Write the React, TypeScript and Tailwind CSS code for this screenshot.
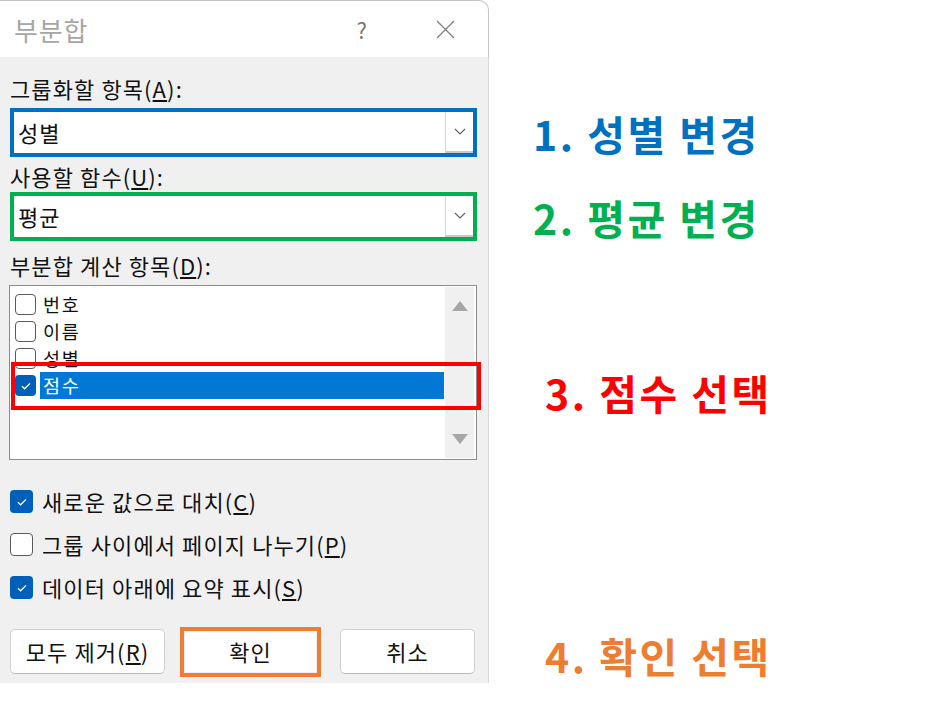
import { ReactNode } from "react"

const font = { fontFamily: '"Noto Sans CJK KR", "Noto Sans", sans-serif' }

function Chevron() {
  return (
    <svg width="12" height="7" viewBox="0 0 12 7" fill="none">
      <path d="M1 1l5 5 5-5" stroke="#606060" strokeWidth="1.2" />
    </svg>
  )
}

function Check({ size = 12 }: { size?: number }) {
  return (
    <svg width={size} height={size} viewBox="0 0 12 12" fill="none">
      <path d="M2 6.2l2.6 2.6L10 3.4" stroke="#ffffff" strokeWidth="1.3" />
    </svg>
  )
}

function Box({ checked, size }: { checked?: boolean; size: string }) {
  return checked ? (
    <span className={`${size} shrink-0 rounded-[4px] bg-[#005fb8] flex items-center justify-center`}>
      <Check />
    </span>
  ) : (
    <span className={`${size} shrink-0 rounded-[4px] border-[1.5px] border-[#5a5a5a] bg-white`} />
  )
}

function Combo({ value, border }: { value: string; border: string }) {
  return (
    <div className={`h-[49px] w-[467px] border-4 ${border} bg-white flex`}>
      <div className="flex-1 flex items-center pl-[4px] text-[22px] tracking-[0.05em] text-[#111]">{value}</div>
      <div className="w-[28px] border-l border-[#d6d6d6] border-b-2 border-b-[#c8c8c8] flex items-center justify-center">
        <Chevron />
      </div>
    </div>
  )
}

function Label({ children, className = "" }: { children: ReactNode; className?: string }) {
  return (
    <div className={`h-[22px] leading-[22px] text-[22px] tracking-[0.05em] text-[#111] ${className}`}>{children}</div>
  )
}

const items = [
  { name: "번호", checked: false },
  { name: "이름", checked: false },
  { name: "성별", checked: false },
  { name: "점수", checked: true },
]

const options = [
  { label: "새로운 값으로 대치", key: "C", checked: true },
  { label: "그룹 사이에서 페이지 나누기", key: "P", checked: false },
  { label: "데이터 아래에 요약 표시", key: "S", checked: true },
]

export default function App() {
  return (
    <div className="w-[940px] h-[701px] bg-white flex overflow-hidden" style={font}>
      {/* dialog */}
      <div className="w-[489px] shrink-0 flex flex-col">
        <div className="h-[57px] bg-white border-t border-r border-[#c4c4c4] rounded-tr-[10px] flex items-center">
          <span className="ml-[14px] text-[26px] tracking-[0.03em] text-[#a6a6a6]">부분합</span>
          <span className="ml-auto mr-[69px] text-[22px] text-[#7a7a7a]">?</span>
          <svg className="mr-[33px]" width="19" height="19" viewBox="0 0 19 19" fill="none">
            <path d="M1 1l17 17M18 1L1 18" stroke="#808080" strokeWidth="1.3" />
          </svg>
        </div>
        <div className="h-[626px] bg-[#f0f0f0] border-r border-[#d8d8d8] pl-[10px] pt-[20px] pb-[9px] flex flex-col">
          <Label>
            그룹화할 항목(<u>A</u>):
          </Label>
          <div className="mt-[9px]">
            <Combo value="성별" border="border-[#0070c0]" />
          </div>
          <Label className="mt-[8px]">
            사용할 함수(<u>U</u>):
          </Label>
          <div className="mt-[5px]">
            <Combo value="평균" border="border-[#00b050]" />
          </div>
          <Label className="mt-[13px]">
            부분합 계산 항목(<u>D</u>):
          </Label>
          <div className="relative mt-[9px] h-[175px] w-[468px] -ml-px border border-[#8c8c8c] bg-white flex">
            <div className="flex-1 pt-[5px] pl-[5px]">
              {items.map((it) => (
                <div key={it.name} className="h-[27px] flex items-center">
                  <Box checked={it.checked} size="w-[21px] h-[21px]" />
                  <span
                    className={`ml-[4px] h-[27px] leading-[27px] text-[18.5px] tracking-[0.1em] pl-[3px] ${
                      it.checked ? "flex-1 bg-[#0078d4] text-white mr-[1px]" : "text-[#111]"
                    }`}
                  >
                    {it.name}
                  </span>
                </div>
              ))}
            </div>
            <div className="w-[29px] mr-[2px] my-[1px] bg-[#f0f0f0] flex flex-col items-center justify-between py-[14px]">
              <svg width="16" height="10" viewBox="0 0 16 10">
                <path d="M8 0L16 10H0z" fill="#a6a6a6" />
              </svg>
              <svg width="16" height="10" viewBox="0 0 16 10">
                <path d="M0 0H16L8 10z" fill="#a6a6a6" />
              </svg>
            </div>
            <div className="absolute left-px top-[76px] w-[470px] h-[48px] border-4 border-[#ff0000]" />
          </div>
          <div className="mt-[20px] flex flex-col">
            {options.map((o) => (
              <div key={o.key} className="h-[43px] flex items-center">
                <Box checked={o.checked} size="w-[23px] h-[23px]" />
                <span className="ml-[9px] text-[22px] tracking-[0.05em] text-[#111]">
                  {o.label}(<u>{o.key}</u>)
                </span>
              </div>
            ))}
          </div>
          <div className="mt-[20px] h-[45px] flex items-center text-[22px] tracking-[0.05em] text-[#111]">
            <button className="w-[155px] h-[45px] bg-white border border-[#d0d0d0] border-b-[#b8b8b8] rounded-[5px]">
              모두 제거(<u>R</u>)
            </button>
            <div className="ml-[15px] w-[141px] h-[50px] border-4 border-[#ed7d31] p-px">
              <button className="w-full h-full bg-white">확인</button>
            </div>
            <button className="ml-[19px] w-[135px] h-[45px] bg-white border border-[#d0d0d0] border-b-[#b8b8b8] rounded-[5px]">
              취소
            </button>
          </div>
        </div>
      </div>
      {/* annotations */}
      <div className="flex flex-col pt-[107px] font-bold text-[41px] tracking-[0.06em] leading-[52px]">
        <div className="ml-[44px] text-[#0070c0]">1. 성별 변경</div>
        <div className="ml-[44px] mt-[32px] text-[#00b050]">2. 평균 변경</div>
        <div className="ml-[56px] mt-[123px] text-[#ff0000]">3. 점수 선택</div>
        <div className="ml-[56px] mt-[211px] text-[#ed7d31]">4. 확인 선택</div>
      </div>
    </div>
  )
}
